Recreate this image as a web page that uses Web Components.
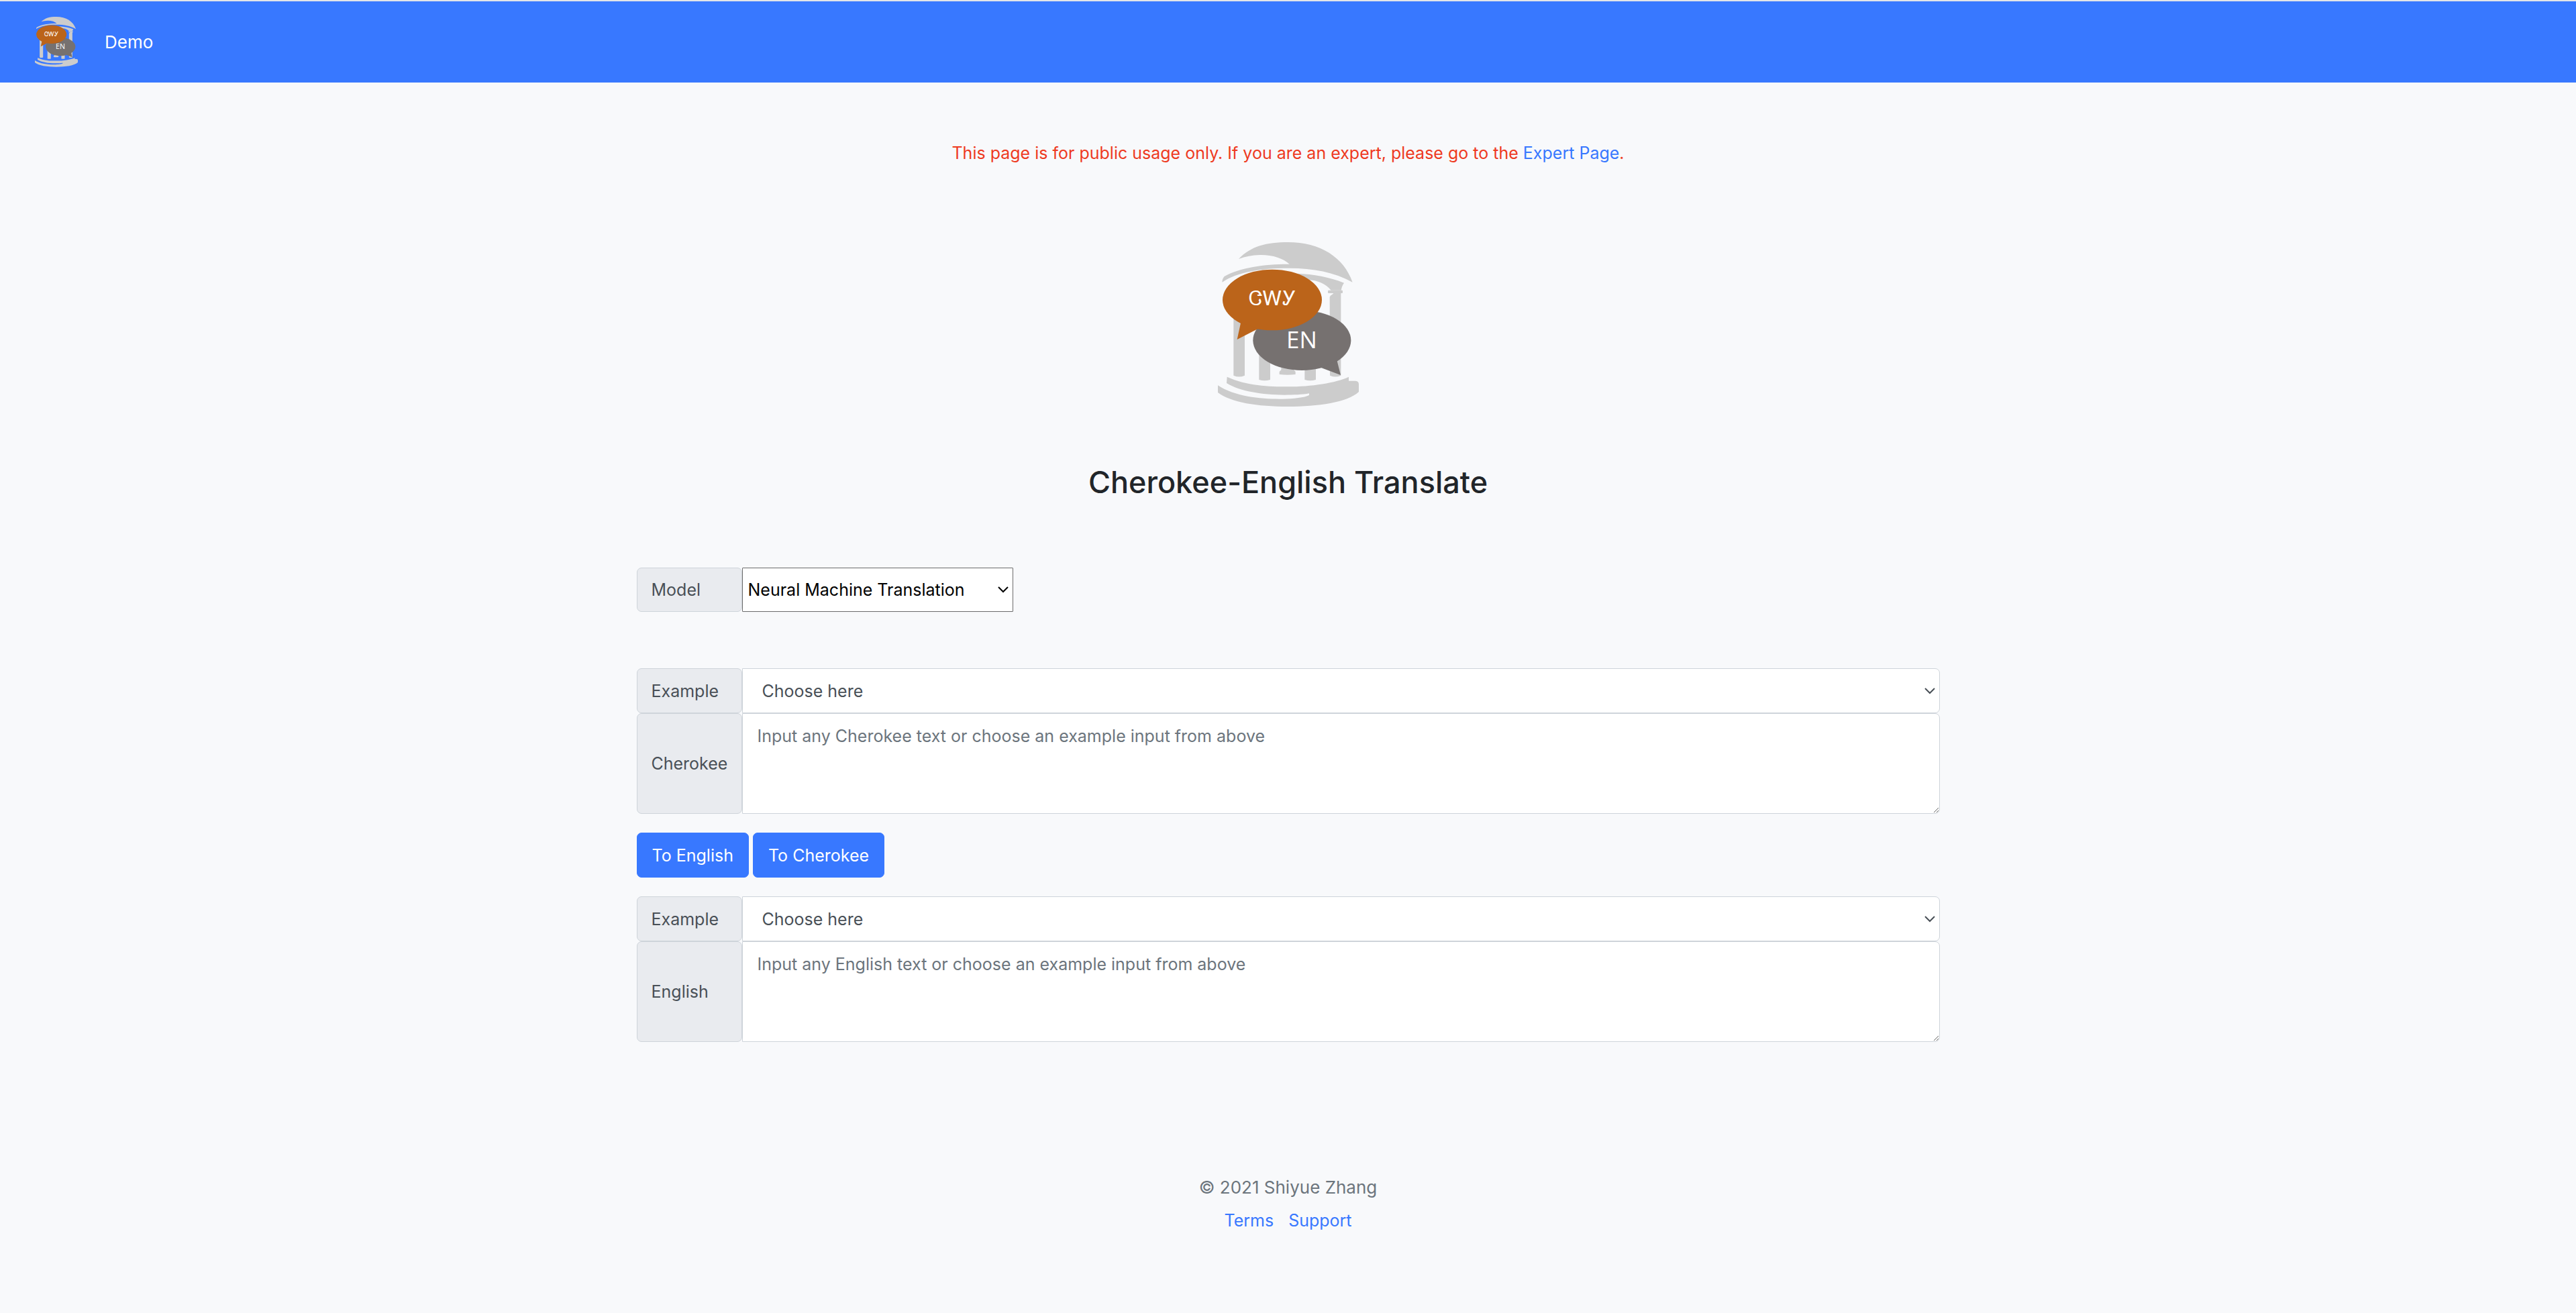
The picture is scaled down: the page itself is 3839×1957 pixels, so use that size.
<!DOCTYPE html>
<html lang="en">
<head>
<meta charset="utf-8">
<title>Cherokee-English Translate</title>
<style>
  body {
    margin: 0;
    background: #f8f9fb;
    color: #212529;
    font: 400 25px/42px Inter, "Liberation Sans", sans-serif;
    --blue: #3878ff;
    --line: #ced4da;
    --muted: #6c757d;
    --ink: #495057;
  }
</style>
</head>
<body>
<translate-page></translate-page>
<script>
class ShadowElement extends HTMLElement {
  connectedCallback() {
    if (this.shadowRoot) return;
    this.attachShadow({ mode: 'open' }).innerHTML =
      '<style>*{box-sizing:border-box}</style>' + this.render();
  }
}

customElements.define('site-logo', class extends ShadowElement {
  render() {
    return `
<style>
  :host { display: block; flex: none; }
  svg { display: block; width: 100%; height: auto; }
</style>
<svg viewBox="102 93 630 735" role="img" aria-label="Cherokee-English Translate logo">
  <g fill="#ccc">
    <path d="M195 168C250 110 320 93 415 93C560 93 665 160 704 272C620 225 520 208 415 209C300 209 190 225 121 272Q122 255 131 246C200 205 320 190 422 191C395 165 345 149 290 150C255 151 225 157 195 168Z"/>
    <path d="M455 233C530 236 600 248 666 275C658 285 655 298 653 308L608 308C585 280 550 262 500 262Z"/>
    <rect x="594" y="308" width="66" height="13" rx="3"/>
    <path d="M602 338Q604 330 614 326L620 320H652V689Q627 700 603 689Z"/>
    <path d="M172 430H222V689Q197 700 172 689Z"/>
    <path d="M286 560H336V708Q311 716 286 708Z"/>
    <path d="M490 560H540V708Q515 716 490 708Z"/>
    <path d="M385 600H441V664L449 672V684Q413 688 377 684V672L385 664Z"/>
    <path d="M143 695C230 735 330 739 415 739C520 739 630 722 687 695V713H715Q732 713 732 728V762C680 810 550 828 415 828C280 828 160 810 102 765V733C180 785 300 795 390 794C440 793 490 788 510 777V769C480 775 440 776 400 776C300 775 200 760 141 723Z"/>
  </g>
  <g fill="#767170">
    <ellipse cx="478" cy="532" rx="219" ry="134"/>
    <path d="M565 655L651 687L634 620Z"/>
  </g>
  <g fill="#bb641a">
    <ellipse cx="345" cy="351" rx="222" ry="136"/>
    <path d="M205 450L188 528L280 481Z"/>
  </g>
  <g fill="#fff" text-anchor="middle">
    <text x="346" y="374" font-size="90" font-family="'DejaVu Serif','DejaVu Sans',serif">ᏣᎳᎩ</text>
    <text x="477" y="566" font-size="105" font-weight="400" font-family="'Open Sans',sans-serif">EN</text>
  </g>
</svg>`;
  }
});

customElements.define('site-header', class extends ShadowElement {
  render() {
    return `
<style>
  :host { display: block; background: var(--blue); border-top: 2px solid #e3e5e8; }
  nav { display: flex; align-items: center; gap: 40px; padding: 23px 52px; min-height: 121px; }
  site-logo { width: 64px; }
  a { color: #fff; text-decoration: none; font-size: 26px; }
</style>
<nav><a href="#"><site-logo></site-logo></a><a href="#demo">Demo</a></nav>`;
  }
});

customElements.define('field-select', class extends ShadowElement {
  render() {
    return `
<style>
  :host { display: flex; height: 67px; }
  label {
    flex: none; width: 157px; padding: 0 21px; display: flex; align-items: center;
    border: 1px solid var(--line); border-radius: 7px; background: #e9ebef; color: var(--ink);
  }
  .box { display: grid; flex: 1; }
  select, svg { grid-area: 1 / 1; }
  select {
    appearance: none; width: 100%; margin: 0; padding: 0 40px 0 29px; font: inherit; color: var(--ink);
    background: #fff; border: 1px solid var(--line); border-radius: 0 7px 7px 0;
  }
  svg {
    width: 16px; height: 10px; place-self: center end; margin-right: 7px; pointer-events: none;
    fill: none; stroke: var(--ink); stroke-width: 2;
  }
  :host([compact]) { height: 66px; }
  :host([compact]) .box { flex: none; width: 404px; }
  :host([compact]) select { padding-left: 8px; color: #000; border-color: #6b6b6b; border-radius: 1px; }
  :host([compact]) svg { stroke: #000; }
</style>
<label for="control">${this.getAttribute('label')}</label>
<div class="box">
  <select id="control"><option>${this.getAttribute('value')}</option></select>
  <svg viewBox="0 0 16 10" aria-hidden="true"><path d="M1 1L8 8L15 1"/></svg>
</div>`;
  }
});

customElements.define('field-text', class extends ShadowElement {
  render() {
    return `
<style>
  :host { display: flex; }
  label {
    flex: none; width: 157px; padding: 0 21px; display: flex; align-items: center;
    border: 1px solid var(--line); border-radius: 7px; background: #e9ebef; color: var(--ink);
  }
  textarea {
    display: block; flex: 1; height: 150px; margin: 0; padding: 12px 22px; font: inherit; color: var(--ink);
    background: #fff; border: 1px solid var(--line); border-radius: 0 7px 7px 0; resize: vertical;
  }
  textarea::placeholder { color: var(--muted); opacity: 1; }
</style>
<label for="control">${this.getAttribute('label')}</label>
<textarea id="control" placeholder="${this.getAttribute('hint')}"></textarea>`;
  }
});

customElements.define('action-button', class extends ShadowElement {
  render() {
    return `
<style>
  :host { display: block; }
  button {
    display: block; height: 67px; padding: 0 22px; border: 1px solid var(--blue); border-radius: 7px;
    background: var(--blue); color: #fff; font: inherit; cursor: pointer;
  }
</style>
<button type="button"><slot></slot></button>`;
  }
});

customElements.define('site-footer', class extends ShadowElement {
  render() {
    return `
<style>
  :host { display: flex; flex-direction: column; align-items: center; gap: 7px; color: var(--muted); }
  p { margin: 0; font-size: 26px; }
  nav { display: flex; gap: 22px; }
  a { color: var(--blue); text-decoration: none; }
</style>
<p>© 2021 Shiyue Zhang</p>
<nav><a href="#terms">Terms</a><a href="#support">Support</a></nav>`;
  }
});

customElements.define('translate-page', class extends ShadowElement {
  render() {
    return `
<style>
  :host { display: block; }
  main { display: flex; flex-direction: column; align-items: center; padding: 84px 26px 0; }
  p { margin: 0 0 112px; color: #ee3a1f; }
  p a { color: var(--blue); text-decoration: none; }
  main > site-logo { width: 210px; }
  h1 { margin: 84px 0 98px; font-size: 45px; line-height: 58px; font-weight: 500; }
  form { width: 100%; max-width: 1942px; }
  .group { margin-top: 84px; }
  .actions { display: flex; gap: 6px; margin: 28px 0; }
  site-footer { margin: 196px 0 84px; }
</style>
<site-header></site-header>
<main>
  <p>This page is for public usage only. If you are an expert, please go to the <a href="#expert">Expert Page</a>.</p>
  <site-logo></site-logo>
  <h1>Cherokee-English Translate</h1>
  <form>
    <field-select compact label="Model" value="Neural Machine Translation"></field-select>
    <div class="group">
      <field-select label="Example" value="Choose here"></field-select>
      <field-text label="Cherokee" hint="Input any Cherokee text or choose an example input from above"></field-text>
    </div>
    <div class="actions">
      <action-button>To English</action-button>
      <action-button>To Cherokee</action-button>
    </div>
    <field-select label="Example" value="Choose here"></field-select>
    <field-text label="English" hint="Input any English text or choose an example input from above"></field-text>
  </form>
</main>
<site-footer></site-footer>`;
  }
});
</script>
</body>
</html>
